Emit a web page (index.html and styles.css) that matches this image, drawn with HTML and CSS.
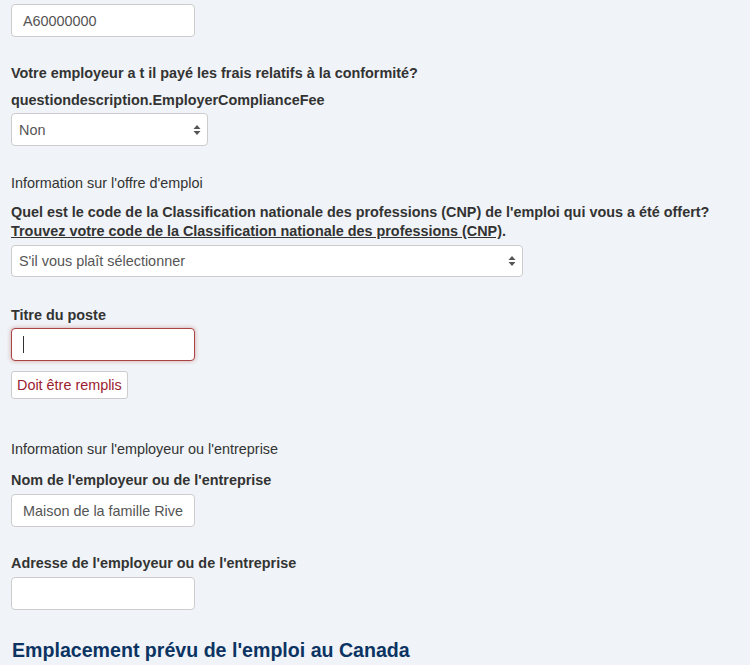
FILE: index.html
```html
<!DOCTYPE html>
<html lang="fr">
<head>
    <meta charset="UTF-8">
    <meta name="viewport" content="width=device-width, initial-scale=1.0">
    <title>Formulaire</title>
    <link rel="stylesheet" href="styles.css">
</head>
<body>
    <form class="form">
        <input type="text" class="field field-sm first" value="A60000000">

        <label class="label label-q">Votre employeur a t il payé les frais relatifs à la conformité?</label>
        <label class="label label-desc">questiondescription.EmployerComplianceFee</label>
        <div class="select-wrap select-sm">
            <select class="field select"><option>Non</option></select>
        </div>

        <p class="section-info">Information sur l'offre d'emploi</p>
        <label class="label label-two">Quel est le code de la Classification nationale des professions (CNP) de l'emploi qui vous a été offert?<br><a href="#" class="link">Trouvez votre code de la Classification nationale des professions (CNP)</a>.</label>
        <div class="select-wrap select-lg">
            <select class="field select"><option>S'il vous plaît sélectionner</option></select>
        </div>

        <label class="label label-title">Titre du poste</label>
        <div class="caret-wrap">
            <input type="text" class="field field-sm field-error">
            <span class="caret"></span>
        </div>
        <div class="error-msg">Doit être remplis</div>

        <p class="section-info section-gap">Information sur l'employeur ou l'entreprise</p>
        <label class="label label-name">Nom de l'employeur ou de l'entreprise</label>
        <input type="text" class="field field-sm" value="Maison de la famille Rive">

        <label class="label label-addr">Adresse de l'employeur ou de l'entreprise</label>
        <input type="text" class="field field-sm">

        <h2 class="heading">Emplacement prévu de l'emploi au Canada</h2>
    </form>
</body>
</html>
```

FILE: styles.css
```css
* {
    margin: 0;
    padding: 0;
    box-sizing: border-box;
    font-family: 'Liberation Sans', Arial, sans-serif;
}

body {
    background: #f0f3f7;
    color: #333;
    font-size: 14.4px;
    overflow: hidden;
}

.form {
    display: flex;
    flex-direction: column;
    align-items: flex-start;
    padding: 4px 11px 0 11px;
}

.field {
    display: block;
    height: 33px;
    padding: 0 11px;
    font-size: 14.4px;
    color: #555;
    background: #fff;
    border: 1px solid #ccc;
    border-radius: 4px;
    outline: none;
}

.field-sm {
    width: 184px;
}

.label {
    display: block;
    font-weight: 700;
    font-size: 14.4px;
    line-height: 20px;
    color: #333;
}

.label-q {
    margin-top: 26px;
}

.label-desc {
    margin-top: 7px;
    margin-bottom: 3px;
}

.select-wrap {
    position: relative;
}

.select-sm {
    width: 197px;
}

.select-lg {
    width: 512px;
}

.select {
    width: 100%;
    padding: 0 7px;
    appearance: none;
    -webkit-appearance: none;
    background: #fff url("data:image/svg+xml;utf8,<svg xmlns='http://www.w3.org/2000/svg' width='8' height='12'><path d='M4 1 L7.5 5 H0.5 Z' fill='%23555'/><path d='M4 11 L7.5 7 H0.5 Z' fill='%23555'/></svg>") no-repeat right 6px center;
}

.section-info {
    margin-top: 27px;
    line-height: 20px;
    color: #333;
}

.label-two {
    margin-top: 10px;
    margin-bottom: 4px;
    line-height: 19px;
}

.link {
    color: #333;
    text-decoration: underline;
}

.select-lg .select {
    height: 32px;
}

.label-title {
    margin-top: 28px;
    margin-bottom: 3px;
}

.caret-wrap {
    position: relative;
}

.field-error {
    border-color: #a94442;
    box-shadow: 0 0 4px rgba(169, 68, 66, 0.45);
}

.caret {
    position: absolute;
    left: 12px;
    top: 8px;
    width: 1px;
    height: 17px;
    background: #333;
}

.error-msg {
    margin-top: 10px;
    height: 28px;
    padding: 0 5px;
    line-height: 26px;
    color: #9b1c2e;
    background: #fff;
    border: 1px solid #ccc;
    border-radius: 3px;
}

.section-gap {
    margin-top: 40px;
}

.label-name {
    margin-top: 11px;
    margin-bottom: 4px;
}

.label-addr {
    margin-top: 26px;
    margin-bottom: 4px;
}

.heading {
    margin-top: 26px;
    margin-left: 1px;
    font-size: 19.6px;
    font-weight: 700;
    line-height: 28px;
    color: #0b3463;
}
```
